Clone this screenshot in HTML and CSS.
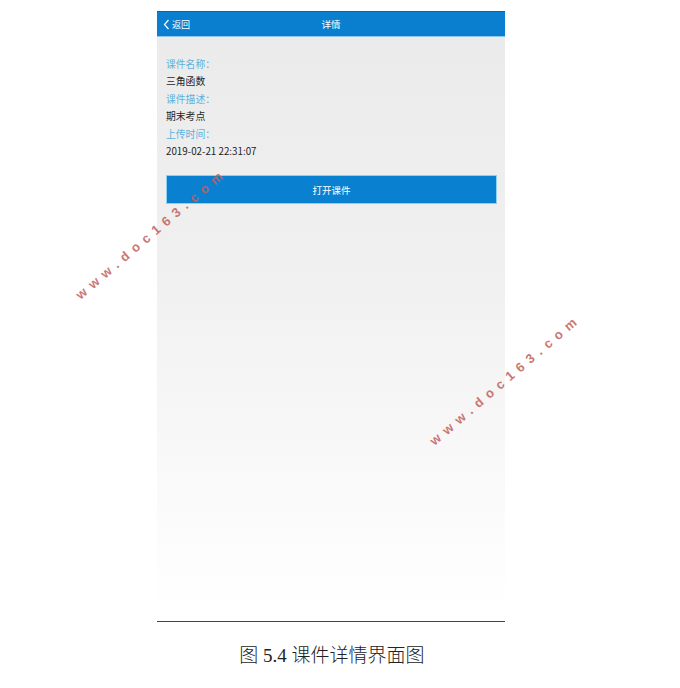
FILE: index.html
```html
<!DOCTYPE html>
<html lang="zh">
<head>
<meta charset="utf-8">
<link rel="stylesheet" href="styles.css">
</head>
<body>
<div class="page">
  <div class="phone">
    <div class="appbar">
      <div class="back">
        <svg class="chev" width="7" height="11" viewBox="0 0 7 11"><path d="M5.5 1 L1.5 5.5 L5.5 10" fill="none" stroke="#fff" stroke-width="1.2"/></svg>
        <span>返回</span>
      </div>
      <div class="title">详情</div>
    </div>
    <div class="content">
      <div class="field">
        <div class="label">课件名称：</div>
        <div class="value">三角函数</div>
      </div>
      <div class="field">
        <div class="label">课件描述：</div>
        <div class="value">期末考点</div>
      </div>
      <div class="field">
        <div class="label">上传时间：</div>
        <div class="value">2019-02-21 22:31:07</div>
      </div>
      <div class="btn">打开课件</div>
    </div>
  </div>
  <div class="rule"></div>
  <div class="caption">图 5.4 课件详情界面图</div>
  <div class="wm wm1">www.doc163.com</div>
  <div class="wm wm2">www.doc163.com</div>
</div>
</body>
</html>
```

FILE: styles.css
```css
html, body {
  margin: 0;
  padding: 0;
  background: #fff;
}
.page {
  position: relative;
  width: 680px;
  height: 688px;
  padding-top: 11px;
  box-sizing: border-box;
  font-family: "Noto Sans CJK SC", "Noto Sans", sans-serif;
}
.phone {
  margin-left: 157px;
  width: 348px;
  height: 600px;
  display: flex;
  flex-direction: column;
}
.appbar {
  height: 26px;
  background: #0a7fd0;
  border-top: 1px solid #0a64a8;
  box-sizing: border-box;
  position: relative;
  display: flex;
  align-items: center;
  justify-content: center;
  color: #fff;
  font-size: 9px;
  border-bottom: 1px solid #8fc8ee;
}
.back {
  position: absolute;
  left: 6px;
  top: 0;
  bottom: 0;
  display: flex;
  align-items: center;
  gap: 2px;
}
.title {
  font-size: 9.5px;
}
.content {
  flex: 1;
  background: linear-gradient(#ebebeb 0%, #f0f0f0 40%, #fdfdfd 92%, #ffffff 100%);
  padding: 19px 8px 0 9px;
  display: flex;
  flex-direction: column;
}
.field {
  display: flex;
  flex-direction: column;
  margin-bottom: 1px;
}
.label {
  color: #5ab2de;
  font-size: 9.8px;
  line-height: 17px;
}
.value {
  color: #1e1e1e;
  font-size: 9.8px;
  line-height: 17px;
}
.btn {
  margin-top: 14px;
  height: 29px;
  background: #0a80d0;
  border: 1px solid #8fd0f0;
  box-sizing: border-box;
  color: #fff;
  font-size: 9.5px;
  display: flex;
  align-items: center;
  justify-content: center;
}
.rule {
  margin-left: 157px;
  margin-top: 10px;
  width: 348px;
  height: 1px;
  background: #444;
}
.caption {
  margin-top: 22px;
  text-align: center;
  padding-right: 16px;
  font-family: "Liberation Serif", "Noto Sans CJK SC", serif;
  font-size: 19px;
  font-weight: 300;
  color: #222;
  line-height: 24px;
}
.wm {
  position: absolute;
  color: #c4605c;
  opacity: 0.85;
  font-family: "Liberation Sans", sans-serif;
  font-size: 13px;
  font-weight: bold;
  letter-spacing: 6.1px;
  white-space: nowrap;
  transform-origin: 0 50%;
  transform: rotate(-40.5deg);
  line-height: 14px;
}
.wm1 {
  left: 78px;
  top: 290px;
}
.wm2 {
  left: 432px;
  top: 436px;
}
```
